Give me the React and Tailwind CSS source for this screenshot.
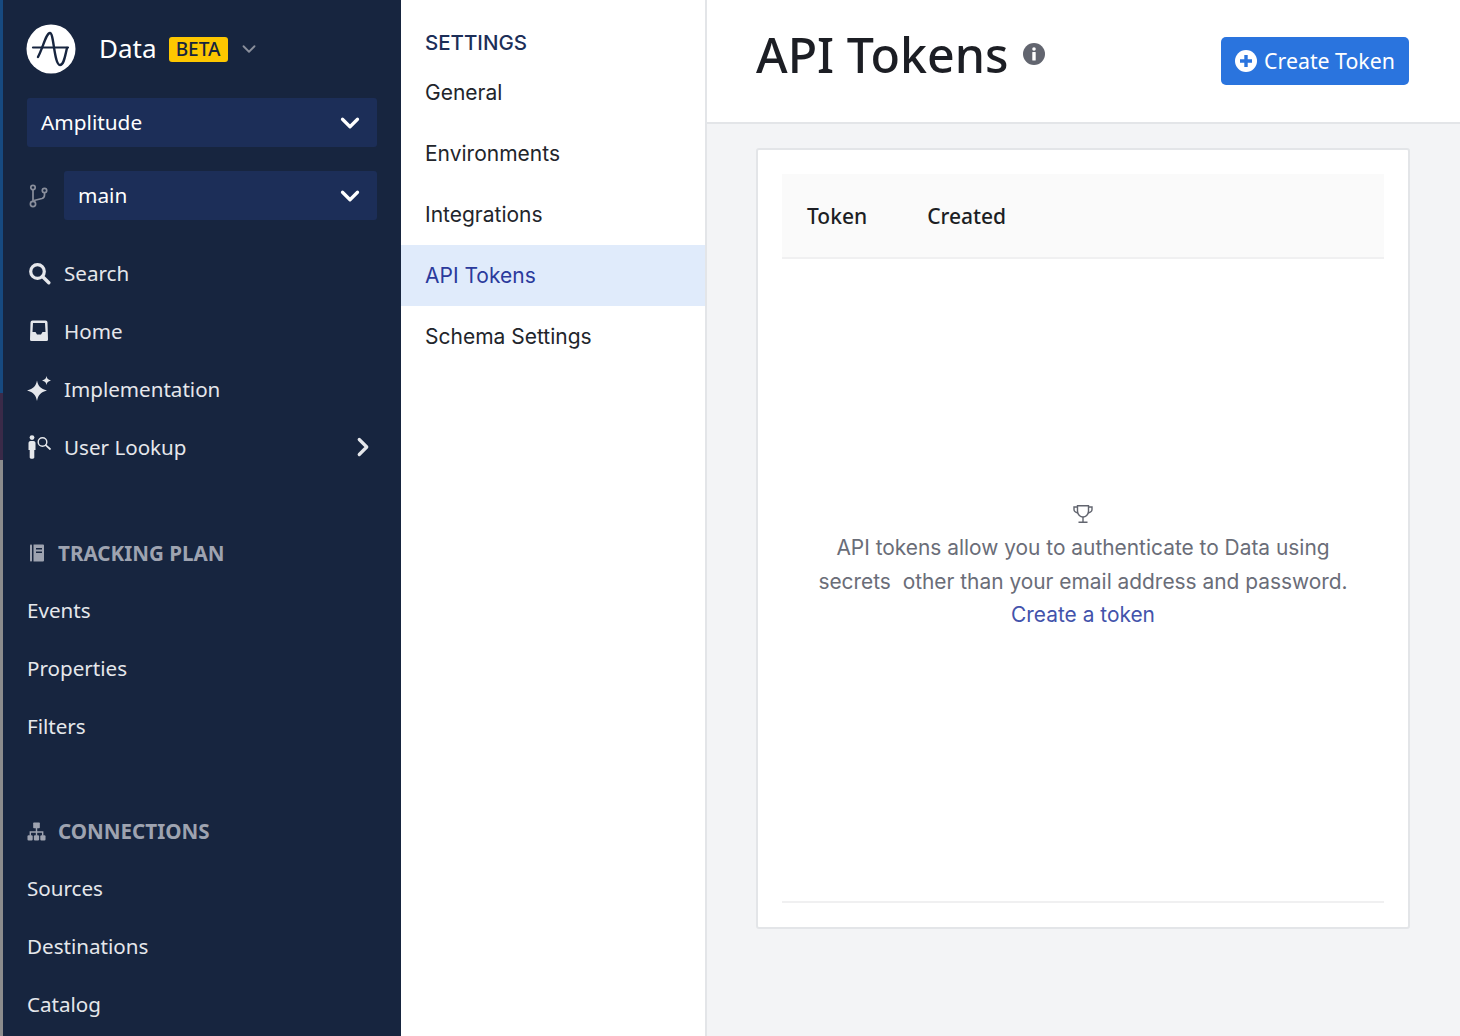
import React from "react";
import { ChevronDown, ChevronRight } from "lucide-react";

const plex = "font-['Noto_Sans','Open_Sans',sans-serif]";
const inter = "font-['Inter',sans-serif]";

function Logo() {
  return (
    <svg width="50" height="50" viewBox="0 0 50 50" className="shrink-0">
      <circle cx="25" cy="25" r="24.500" fill="#fff" />
      <path d="M7 23.500H42" stroke="#17253f" strokeWidth="2.200" fill="none" strokeLinecap="round" />
      <path d="M12 33C17 24 20 9 24 9C28 9 28 41 34 41C38 41 39 32 41 24" stroke="#17253f" strokeWidth="2.400" fill="none" strokeLinecap="round" />
    </svg>
  );
}

function BranchIcon() {
  return (
    <svg width="22" height="24" viewBox="0 0 22 24" fill="none" stroke="#8a8f9c" strokeWidth="1.700" className="shrink-0">
      <circle cx="4" cy="3.500" r="2.200" />
      <circle cx="15.500" cy="6.500" r="2.200" />
      <circle cx="4" cy="20" r="2.600" />
      <path d="M4 5.800V17.400M5 16.500L13 14.500C14.800 14 15.500 12.500 15.500 11V8.800" />
    </svg>
  );
}

function SearchIcon() {
  return (
    <svg width="23" height="23" viewBox="0 0 23 23" fill="none" stroke="#e5e7eb" className="shrink-0">
      <circle cx="9.500" cy="9.500" r="6.800" strokeWidth="3.200" />
      <path d="M14.500 14.500L20.800 20.800" strokeWidth="3.400" strokeLinecap="round" />
    </svg>
  );
}

function HomeIcon() {
  return (
    <svg width="20" height="22" viewBox="0 0 20 22" className="shrink-0">
      <path fillRule="evenodd" fill="#e5e7eb" d="M3.500 0.500h13A2 2 0 0 1 18.500 2.500l0.500 17a1.500 1.500 0 0 1-1.500 1.500H2.500A1.500 1.500 0 0 1 1 19.500L1.500 2.500a2 2 0 0 1 2-2ZM4 3 3.500 12H6.500L8 14.500H12L13.500 12H16.500L16 3Z" />
    </svg>
  );
}

function SparkIcon() {
  return (
    <svg width="24" height="26" viewBox="0 0 24 26" className="shrink-0">
      <path fill="#e5e7eb" d="M10 4.500C11.200 10 13.500 12.800 20 14.500C13.500 16.200 11.200 19 10 25C8.800 19 6.500 16.200 0 14.500C6.500 12.800 8.800 10 10 4.500Z" />
      <path fill="#e5e7eb" d="M19.500 0C20 2.600 21 3.800 24 4.500C21 5.200 20 6.400 19.500 9C19 6.400 18 5.200 15 4.500C18 3.800 19 2.600 19.500 0Z" />
    </svg>
  );
}

function UserLookupIcon() {
  return (
    <svg width="24" height="24" viewBox="0 0 24 24" className="shrink-0">
      <circle cx="5" cy="2.600" r="2.400" fill="#e5e7eb" />
      <path fill="#e5e7eb" d="M1.500 8C1.500 6.700 2.500 6 3.500 6H6.500C7.500 6 8.500 6.700 8.500 8V15H7.300V22.500C7.300 24.300 2.700 24.300 2.700 22.500V15H1.500Z" />
      <circle cx="15.500" cy="7" r="4.300" fill="none" stroke="#e5e7eb" strokeWidth="1.400" />
      <path d="M18.700 10.200 23 14" stroke="#e5e7eb" strokeWidth="1.700" strokeLinecap="round" />
    </svg>
  );
}

function BookIcon() {
  return (
    <svg width="16" height="18" viewBox="0 0 16 18" className="shrink-0">
      <rect x="1" y="0.500" width="2" height="17" rx="0.800" fill="#9ea3b0" />
      <path fillRule="evenodd" fill="#9ea3b0" d="M4.500 0.500H14a1 1 0 0 1 1 1v15a1 1 0 0 1-1 1H4.500ZM7 4V5.500H13V4ZM7 7.500V9H13V7.500Z" />
    </svg>
  );
}

function SitemapIcon() {
  return (
    <svg width="19" height="19" viewBox="0 0 20 20" className="shrink-0">
      <rect x="6.500" y="0.500" width="7" height="6" rx="0.800" fill="#9ea3b0" />
      <path d="M10 6V10.500M3.500 14.500V10.500H16.500V14.500M10 10.500V14.500" stroke="#9ea3b0" strokeWidth="1.500" fill="none" />
      <rect x="0.500" y="14" width="5.500" height="5.500" rx="1.200" fill="#9ea3b0" />
      <rect x="7.250" y="14" width="5.500" height="5.500" rx="1.200" fill="#9ea3b0" />
      <rect x="14" y="14" width="5.500" height="5.500" rx="1.200" fill="#9ea3b0" />
    </svg>
  );
}

function TrophyIcon() {
  return (
    <svg width="20" height="18" viewBox="0 0 20 18" fill="none" stroke="#62656f" strokeWidth="1.400" className="shrink-0">
      <path d="M4.500 0.700H15.500V6C15.500 9.800 12.500 12 10 12C7.500 12 4.500 9.800 4.500 6Z" />
      <path d="M4.500 2H1V4.500C1 6.500 3 7.500 5 8M15.500 2H19V4.500C19 6.500 17 7.500 15 8" />
      <path d="M10 12V17M5.500 17.300H14.500" />
    </svg>
  );
}

function NavItem({ icon, label, trailing }) {
  return (
    <div className="h-[58px] flex items-center text-[#e5e7eb] text-[20.600px]">
      <div className="w-[24px] h-[24px] mr-[13px] flex items-center justify-center shrink-0">{icon}</div>
      <span className="flex-1">{label}</span>
      {trailing}
    </div>
  );
}

function SubItem({ label }) {
  return <div className="h-[58px] flex items-center text-[#e5e7eb] text-[20.600px]">{label}</div>;
}

function SectionHead({ icon, label }) {
  return (
    <div className="h-[56px] flex items-center text-[#9ea3b0] text-[20.600px] font-bold">
      <div className="w-[19px] mr-[12px] flex justify-center shrink-0">{icon}</div>
      <span>{label}</span>
    </div>
  );
}

function Select({ label, className }) {
  return (
    <div className={`h-[49px] bg-[#1c2e58] rounded-[3px] flex items-center justify-between pl-[14px] pr-[12px] text-white text-[20.800px] ${className}`}>
      <span>{label}</span>
      <ChevronDown size={30} strokeWidth={2.600} className="text-white" />
    </div>
  );
}

function SettingsItem({ label, active }) {
  return (
    <div className={`h-[61px] flex items-center pl-[24px] text-[21px] ${active ? "bg-[#e0ebfb] text-[#2b3a9c]" : "text-[#22252b]"}`}>
      <span>{label}</span>
    </div>
  );
}

export default function App() {
  return (
    <div className={`w-[1460px] h-[1036px] overflow-hidden flex bg-white ${plex}`}>
      <div className="w-[3px] h-full shrink-0 flex flex-col">
        <div className="h-[393px] bg-[#174a80]" />
        <div className="h-[67px] bg-[#3a2a48]" />
        <div className="flex-1 bg-[#8c8c8c]" />
      </div>
      <aside className="w-[398px] h-full shrink-0 bg-[#17253f] pl-[24px] pr-[24px] overflow-hidden">
        <div className="h-[98px] flex items-center -ml-[1px] gap-[23px]">
          <Logo />
          <div className="flex items-center">
            <span className="text-white text-[26px] mr-[12px] -mt-[1px]">Data</span>
            <span className="h-[25px] w-[59px] justify-center bg-[#fdc700] rounded-[3px] text-[#17253f] text-[19px] font-medium flex items-center leading-none">BETA</span>
            <ChevronDown size={22} strokeWidth={2} className="ml-[10px] text-[#8a8f9c]" />
          </div>
        </div>
        <Select label="Amplitude" />
        <div className="flex items-center mt-[24px]">
          <div className="w-[37px] shrink-0 flex pl-[2px]">
            <BranchIcon />
          </div>
          <Select label="main" className="flex-1" />
        </div>
        <div className="mt-[24px]">
          <NavItem icon={<SearchIcon />} label="Search" />
          <NavItem icon={<HomeIcon />} label="Home" />
          <NavItem icon={<SparkIcon />} label="Implementation" />
          <NavItem icon={<UserLookupIcon />} label="User Lookup" trailing={<ChevronRight size={30} strokeWidth={2.600} className="text-[#e5e7eb] -mr-[1px]" />} />
        </div>
        <div className="mt-[49px]">
          <SectionHead icon={<BookIcon />} label="TRACKING PLAN" />
          <SubItem label="Events" />
          <SubItem label="Properties" />
          <SubItem label="Filters" />
        </div>
        <div className="mt-[48px]">
          <SectionHead icon={<SitemapIcon />} label="CONNECTIONS" />
          <SubItem label="Sources" />
          <SubItem label="Destinations" />
          <SubItem label="Catalog" />
        </div>
      </aside>

      <nav className={`w-[306px] h-full shrink-0 bg-white border-r-2 border-[#e3e5e8] ${inter}`}>
        <div className="pl-[24px] pt-[29px] h-[62px] text-[#1c2e58] text-[20.500px] font-medium leading-[28px]">SETTINGS</div>
        <SettingsItem label="General" />
        <SettingsItem label="Environments" />
        <SettingsItem label="Integrations" />
        <SettingsItem label="API Tokens" active />
        <SettingsItem label="Schema Settings" />
      </nav>

      <main className="flex-1 h-full bg-[#f3f4f6] flex flex-col min-w-0">
        <header className="h-[124px] shrink-0 bg-white border-b-2 border-[#e3e5e8] flex items-center justify-between pl-[49px] pr-[51px]">
          <div className="flex items-center gap-[14px] -mt-[13px]">
            <h1 className="text-[#1c1e24] text-[48.300px] font-medium leading-none">API Tokens</h1>
            <svg width="22" height="22" viewBox="0 0 22 22" className="shrink-0">
              <circle cx="11" cy="11" r="11" fill="#62656f" />
              <circle cx="11" cy="6" r="1.800" fill="#fff" />
              <rect x="9.300" y="9" width="3.400" height="8.500" rx="0.500" fill="#fff" />
            </svg>
          </div>
          <button className="w-[188px] h-[48px] bg-[#2a74de] rounded-[5px] flex items-center justify-center gap-[7px] text-white text-[21.300px]">
            <svg width="22" height="22" viewBox="0 0 22 22" className="shrink-0">
              <circle cx="11" cy="11" r="11" fill="#fff" />
              <path d="M11 5V17M5 11H17" stroke="#2a74de" strokeWidth="3.400" />
            </svg>
            Create Token
          </button>
        </header>
        <div className="pl-[49px] pr-[50px] pt-[24px]">
          <section className="h-[781px] bg-white border-2 border-[#e3e5e8] rounded-[3px] px-[24px] pt-[24px] flex flex-col">
            <div className="h-[85px] shrink-0 bg-[#fafafa] border-b-2 border-[#f0f0f1] flex items-center gap-[60px] pl-[25px] text-[#1c1e24] text-[21px] font-medium">
              <span className="mt-[2px]">Token</span>
              <span className="mt-[2px]">Created</span>
            </div>
            <div className={`h-[644px] shrink-0 border-b-2 border-[#f0f0f1] flex flex-col items-center pt-[246px] ${inter}`}>
              <TrophyIcon />
              <p className="mt-[8px] text-[#6a6d78] text-[20.900px] leading-[34px] text-center whitespace-pre-line">
                {"API tokens allow you to authenticate to Data using\nsecrets\u00a0 other than your email address and password."}
              </p>
              <a className="text-[#4353ab] text-[20.900px] leading-[32px]">Create a token</a>
            </div>
          </section>
        </div>
      </main>
    </div>
  );
}
